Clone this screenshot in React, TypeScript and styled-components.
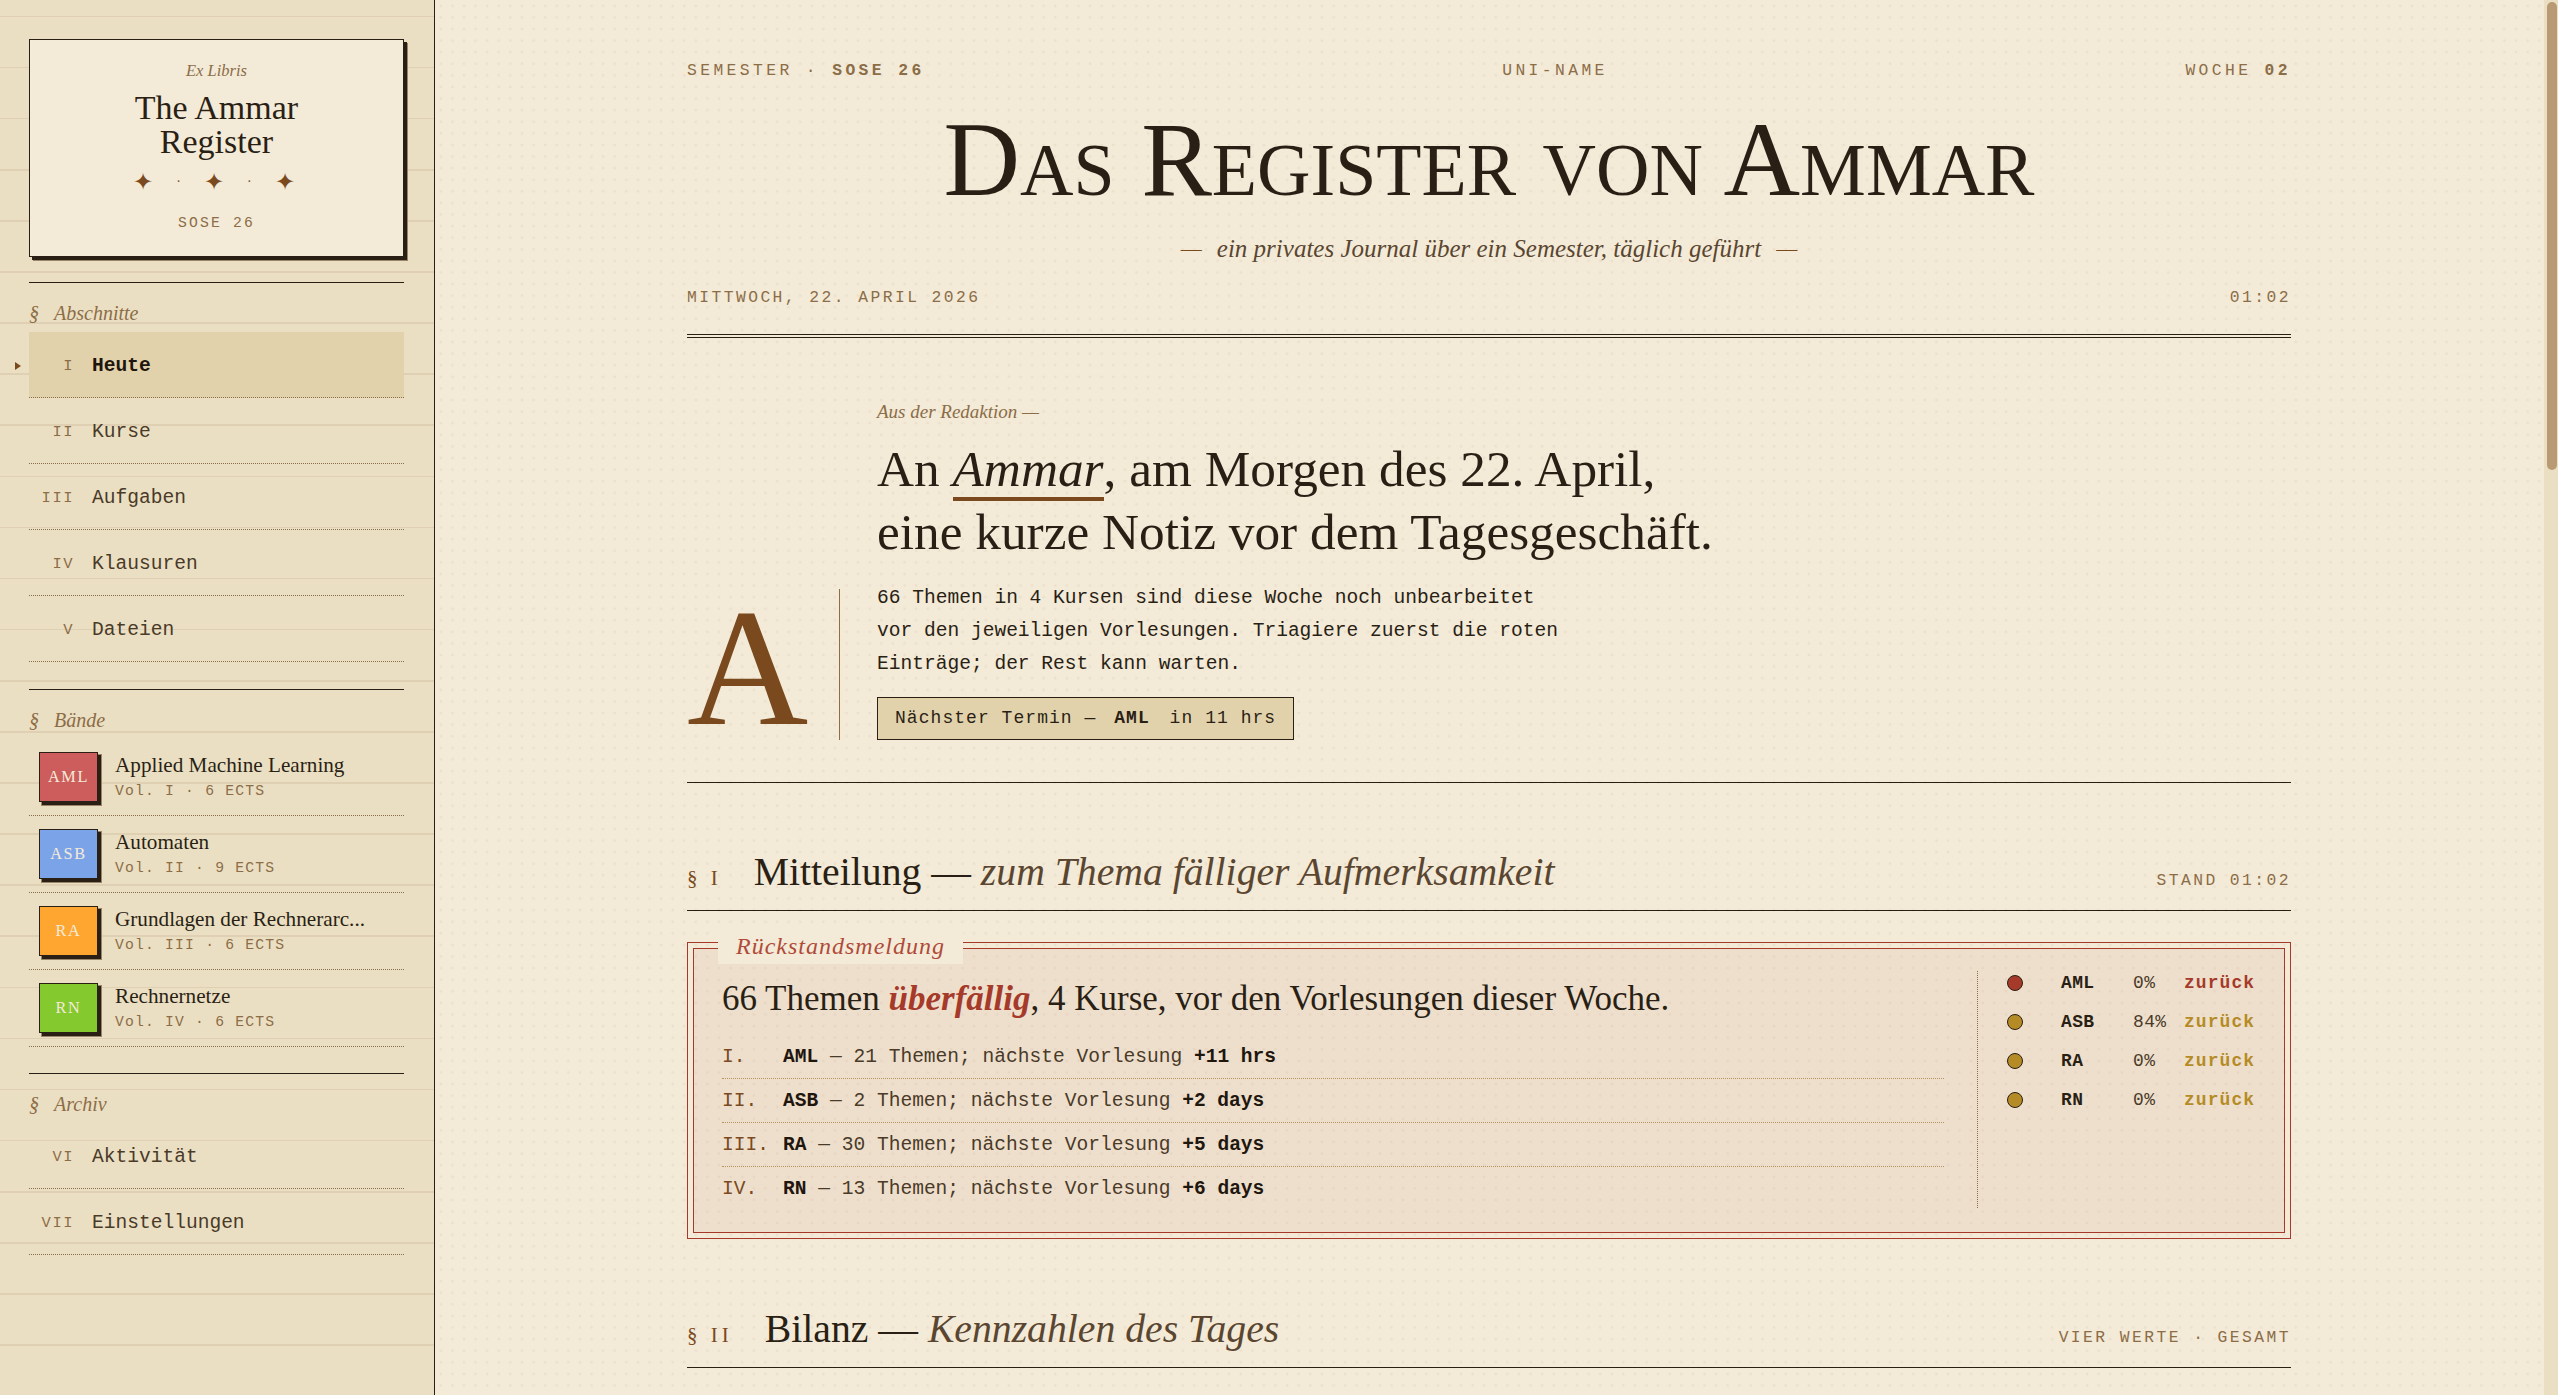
import styled, { createGlobalStyle } from 'styled-components';

const serif = `"Liberation Serif", "Times New Roman", serif`;
const mono = `"Liberation Mono", "Courier New", monospace`;

const GlobalStyle = createGlobalStyle`
  html, body {
    margin: 0;
    padding: 0;
    background: #f3ead8;
  }
`;

const Shell = styled.div`
  display: grid;
  grid-template-columns: 435px 1fr 14px;
  min-height: 100vh;
  color: #2a1f14;
`;

const Sidebar = styled.aside`
  box-sizing: border-box;
  min-height: 1395px;
  border-right: 1px solid #2a1f14;
  padding: 39px 30px 0 29px;
  background-color: #ebdfc3;
  background-image: repeating-linear-gradient(
    to bottom,
    transparent 0,
    transparent 15.6px,
    #dfd0b4 15.6px,
    #dfd0b4 17.2px,
    transparent 17.2px,
    transparent 51.1px
  );
`;

const Plate = styled.div`
  box-sizing: border-box;
  height: 218px;
  border: 1px solid #2a1f14;
  background: #f3ead8;
  box-shadow: 3px 3px 0 #2a1f14, 4px 4px 0 #9a8568;
  text-align: center;
  padding-top: 19px;
`;

const PlateKicker = styled.div`
  font: italic 16.5px/24px ${serif};
  color: #8b6d47;
`;

const PlateTitle = styled.div`
  font: 34px/34px ${serif};
  color: #2a1f14;
  margin-top: 8px;
`;

const PlateStars = styled.div`
  font: 24px/30px ${serif};
  color: #7a4a1e;
  margin-top: 8px;
  padding-right: 5px;
  display: flex;
  justify-content: center;
  align-items: center;
  gap: 23px;
`;

const PlateDot = styled.span`
  font-size: 14px;
`;

const PlateTerm = styled.div`
  font: 14.7px/20px ${mono};
  letter-spacing: 2.2px;
  color: #8b6d47;
  margin-top: 16px;
`;

const SectionLabel = styled.div<{ $gap: number }>`
  border-top: 1px solid #2a1f14;
  margin-top: ${(p) => p.$gap}px;
  height: 50px;
  box-sizing: border-box;
  padding-top: 16px;
  font: italic 20px/28px ${serif};
  color: #8b6d47;
`;

const Sect = styled.span`
  margin-right: 15px;
`;

const NavItem = styled.div<{ $active?: boolean }>`
  position: relative;
  box-sizing: border-box;
  display: grid;
  grid-template-columns: 45px 1fr;
  column-gap: 18px;
  align-items: center;
  height: 66px;
  padding-top: 2px;
  border-bottom: 1px dotted #8b6d47;
  background: ${(p) => (p.$active ? '#e2d2ac' : 'transparent')};
  font: ${(p) => (p.$active ? 'bold' : 'normal')} 19.57px ${mono};
  color: ${(p) => (p.$active ? '#1f160d' : '#4a3a28')};
`;

const NavMarker = styled.span`
  position: absolute;
  left: -14px;
  top: 30px;
  width: 0;
  height: 0;
  border-left: 6px solid #7a4a1e;
  border-top: 4px solid transparent;
  border-bottom: 4px solid transparent;
`;

const NavNum = styled.span`
  font: 15.5px ${mono};
  letter-spacing: 1.5px;
  text-align: right;
  color: #8b6d47;
`;

const CourseRow = styled.div`
  display: flex;
  gap: 17px;
  box-sizing: border-box;
  height: 77px;
  padding: 13px 0 0 10px;
  border-bottom: 1px dotted #8b6d47;
`;

const Spine = styled.div<{ $color: string }>`
  box-sizing: border-box;
  flex: none;
  width: 59px;
  height: 50px;
  border: 1px solid #2a1f14;
  background: ${(p) => p.$color};
  box-shadow: 3px 3px 0 #2a1f14, 3px 3px 0 1px #9a8568;
  font: 16.3px/48px ${serif};
  letter-spacing: 1.6px;
  text-align: center;
  color: #f3ead8;
`;

const CourseName = styled.div`
  font: 21.2px/26px ${serif};
  color: #2a1f14;
  white-space: nowrap;
`;

const CourseMeta = styled.div`
  font: 14.7px/20px ${mono};
  letter-spacing: 1.2px;
  color: #8b6d47;
  margin-top: 3px;
`;

const Main = styled.main`
  box-sizing: border-box;
  padding: 59px 253px 0 252px;
  background-color: #f3ead8;
  background-image: radial-gradient(circle, rgba(139, 109, 71, 0.08) 1.4px, transparent 1.6px);
  background-size: 11.6px 11.6px;
`;

const Masthead = styled.div`
  display: flex;
  justify-content: space-between;
  font: 16.31px/24px ${mono};
  letter-spacing: 3.42px;
  color: #8b6d47;
`;

const Strong = styled.strong`
  font-weight: bold;
`;

const BigTitle = styled.h1`
  margin: 21px 0 0;
  font: normal 106px/112px ${serif};
  font-variant: small-caps;
  text-align: center;
  color: #2a1f14;
`;

const Subtitle = styled.div`
  display: flex;
  justify-content: center;
  gap: 15px;
  font: italic 25px/34px ${serif};
  color: #5a4630;
  margin-top: 16px;
`;

const SubtitleDash = styled.span`
  font: 21px/34px ${serif};
  color: #7a4a1e;
`;

const DateRow = styled(Masthead)`
  margin-top: 20px;
  padding-bottom: 24px;
  border-bottom: 4px double #2a1f14;
  letter-spacing: 2.45px;
`;

const Editorial = styled.section`
  padding: 62px 0 42px;
  border-bottom: 1px solid #2a1f14;
`;

const EditorialHead = styled.div`
  margin-left: 190px;
`;

const Kicker = styled.div`
  font: italic 19px/24px ${serif};
  color: #8b6d47;
`;

const Lead = styled.h2`
  margin: 13px 0 0;
  font: normal 51.3px/63px ${serif};
  color: #2a1f14;
`;

const Ammar = styled.em`
  border-bottom: 4px solid #7a4a1e;
`;

const EditorialBody = styled.div`
  display: flex;
  margin-top: 19px;
`;

const DropCap = styled.div`
  box-sizing: border-box;
  flex: none;
  width: 153px;
  height: 151px;
  margin-top: 7px;
  border-right: 1px solid #8b6d47;
  font: 168px/156px ${serif};
  color: #7a4a1e;
`;

const Body = styled.div`
  margin-left: 37px;
`;

const BodyText = styled.p`
  margin: 0;
  font: 19.57px/33px ${mono};
  color: #2a1f14;
`;

const NextBadge = styled.div`
  display: inline-block;
  box-sizing: border-box;
  height: 43px;
  margin-top: 16px;
  padding: 0 17px;
  border: 1px solid #2a1f14;
  background: #e2d2ac;
  font: 17.94px/41px ${mono};
  letter-spacing: 1.08px;
  color: #2a1f14;
`;

const BadgeCode = styled.strong`
  font-weight: bold;
  margin: 0 8px 0 6px;
`;

const SectionHead = styled.div<{ $top: number }>`
  display: flex;
  align-items: baseline;
  margin-top: ${(p) => p.$top}px;
  padding-bottom: 7px;
  border-bottom: 1px solid #2a1f14;
`;

const SectionNum = styled.span`
  font: 21px/50px ${serif};
  letter-spacing: 4px;
  color: #7a4a1e;
  margin-right: 32px;
`;

const SectionTitle = styled.span`
  font: 39.7px/50px ${serif};
  color: #2a1f14;
`;

const SectionSub = styled.em`
  color: #5a4630;
`;

const SectionNote = styled.span`
  margin-left: auto;
  font: 16.31px ${mono};
  letter-spacing: 2.45px;
  color: #8b6d47;
`;

const Notice = styled.section`
  position: relative;
  box-sizing: border-box;
  margin-top: 31px;
  padding: 5px;
  border: 1px solid #a63a2a;
  height: 297px;
`;

const NoticeInner = styled.div`
  box-sizing: border-box;
  height: 100%;
  border: 1px solid #a63a2a;
  background: rgba(166, 58, 42, 0.06);
  display: grid;
  grid-template-columns: 1fr 307px;
  padding-left: 28px;
`;

const NoticeTag = styled.span`
  position: absolute;
  left: 30px;
  top: -14px;
  padding: 0 18px;
  background: #f3ead8;
  font: italic 24px/35px ${serif};
  letter-spacing: 1px;
  color: #b04a38;
`;

const NoticeLead = styled.h3`
  margin: 28px 0 0;
  font: normal 35px/44px ${serif};
  color: #2a1f14;
`;

const Overdue = styled.em`
  color: #a63a2a;
  font-weight: bold;
`;

const NoticeList = styled.div`
  margin: 14px 33px 0 0;
`;

const NoticeRow = styled.div<{ $last?: boolean }>`
  box-sizing: border-box;
  display: grid;
  grid-template-columns: 61px 1fr;
  height: 44px;
  align-items: center;
  border-bottom: ${(p) => (p.$last ? 'none' : '1px dotted #b5935e')};
  font: 19.57px ${mono};
  color: #4a3a28;
`;

const RowNum = styled.span`
  color: #7a4a1e;
`;

const RowStrong = styled.strong`
  font-weight: bold;
  color: #1f160d;
`;

const StatusList = styled.div`
  border-left: 1px dotted #8b6d47;
  margin: 22px 0 24px;
  padding: 1px 0 0 29px;
`;

const StatusRow = styled.div`
  display: grid;
  grid-template-columns: 54px 72px 51px 1fr;
  height: 22px;
  margin-bottom: 17px;
  align-items: center;
  font: 17.94px ${mono};
  letter-spacing: 0.4px;
  color: #4a3a28;
`;

const Dot = styled.span<{ $color: string }>`
  box-sizing: border-box;
  width: 16px;
  height: 16px;
  border-radius: 50%;
  border: 1px solid #2a1f14;
  background: ${(p) => p.$color};
`;

const StatusCode = styled.span`
  font-weight: bold;
  color: #2a1f14;
`;

const StatusState = styled.span<{ $color: string }>`
  color: ${(p) => p.$color};
  font-weight: bold;
  letter-spacing: 1.1px;
`;

const ScrollTrack = styled.div`
  box-sizing: border-box;
  background: #ebdfc3;
  padding: 2px 1px 0 3px;
`;

const ScrollThumb = styled.div`
  height: 468px;
  border-radius: 5px;
  background: #b89b74;
`;

const nav = [
  { num: 'II', label: 'Kurse' },
  { num: 'III', label: 'Aufgaben' },
  { num: 'IV', label: 'Klausuren' },
  { num: 'V', label: 'Dateien' },
];

const courses = [
  { code: 'AML', color: '#cd5c5c', name: 'Applied Machine Learning', meta: 'Vol. I · 6 ECTS' },
  { code: 'ASB', color: '#7ba3e8', name: 'Automaten', meta: 'Vol. II · 9 ECTS' },
  { code: 'RA', color: '#ffa630', name: 'Grundlagen der Rechnerarc...', meta: 'Vol. III · 6 ECTS' },
  { code: 'RN', color: '#84c92e', name: 'Rechnernetze', meta: 'Vol. IV · 6 ECTS' },
];

const notices = [
  { num: 'I.', code: 'AML', text: '21 Themen; nächste Vorlesung', when: '+11 hrs' },
  { num: 'II.', code: 'ASB', text: '2 Themen; nächste Vorlesung', when: '+2 days' },
  { num: 'III.', code: 'RA', text: '30 Themen; nächste Vorlesung', when: '+5 days' },
  { num: 'IV.', code: 'RN', text: '13 Themen; nächste Vorlesung', when: '+6 days' },
];

const statuses = [
  { code: 'AML', pct: '0%', color: '#a63a2a' },
  { code: 'ASB', pct: '84%', color: '#b58b25' },
  { code: 'RA', pct: '0%', color: '#b58b25' },
  { code: 'RN', pct: '0%', color: '#b58b25' },
];

const App = () => (
  <>
    <GlobalStyle />
    <Shell>
      <Sidebar>
        <Plate>
          <PlateKicker>Ex Libris</PlateKicker>
          <PlateTitle>
            The Ammar
            <br />
            Register
          </PlateTitle>
          <PlateStars>
            ✦<PlateDot>·</PlateDot>✦<PlateDot>·</PlateDot>✦
          </PlateStars>
          <PlateTerm>SOSE 26</PlateTerm>
        </Plate>
        <SectionLabel $gap={25}>
          <Sect>§</Sect>Abschnitte
        </SectionLabel>
        <NavItem $active>
          <NavMarker />
          <NavNum>I</NavNum>
          <span>Heute</span>
        </NavItem>
        {nav.map((item) => (
          <NavItem key={item.num}>
            <NavNum>{item.num}</NavNum>
            <span>{item.label}</span>
          </NavItem>
        ))}
        <SectionLabel $gap={27}>
          <Sect>§</Sect>Bände
        </SectionLabel>
        {courses.map((course) => (
          <CourseRow key={course.code}>
            <Spine $color={course.color}>{course.code}</Spine>
            <div>
              <CourseName>{course.name}</CourseName>
              <CourseMeta>{course.meta}</CourseMeta>
            </div>
          </CourseRow>
        ))}
        <SectionLabel $gap={26}>
          <Sect>§</Sect>Archiv
        </SectionLabel>
        <NavItem>
          <NavNum>VI</NavNum>
          <span>Aktivität</span>
        </NavItem>
        <NavItem>
          <NavNum>VII</NavNum>
          <span>Einstellungen</span>
        </NavItem>
      </Sidebar>
      <Main>
        <Masthead>
          <span>
            SEMESTER · <Strong>SOSE 26</Strong>
          </span>
          <span>UNI-NAME</span>
          <span>
            WOCHE <Strong>02</Strong>
          </span>
        </Masthead>
        <BigTitle>Das Register von Ammar</BigTitle>
        <Subtitle>
          <SubtitleDash>—</SubtitleDash>
          <span>ein privates Journal über ein Semester, täglich geführt</span>
          <SubtitleDash>—</SubtitleDash>
        </Subtitle>
        <DateRow>
          <span>MITTWOCH, 22. APRIL 2026</span>
          <span>01:02</span>
        </DateRow>
        <Editorial>
          <EditorialHead>
            <Kicker>Aus der Redaktion —</Kicker>
            <Lead>
              An <Ammar>Ammar</Ammar>, am Morgen des 22. April,
              <br />
              eine kurze Notiz vor dem Tagesgeschäft.
            </Lead>
          </EditorialHead>
          <EditorialBody>
            <DropCap>A</DropCap>
            <Body>
              <BodyText>
                66 Themen in 4 Kursen sind diese Woche noch unbearbeitet
                <br />
                vor den jeweiligen Vorlesungen. Triagiere zuerst die roten
                <br />
                Einträge; der Rest kann warten.
              </BodyText>
              <NextBadge>
                Nächster Termin — <BadgeCode>AML</BadgeCode> in 11 hrs
              </NextBadge>
            </Body>
          </EditorialBody>
        </Editorial>
        <SectionHead $top={64}>
          <SectionNum>§ I</SectionNum>
          <SectionTitle>
            Mitteilung — <SectionSub>zum Thema fälliger Aufmerksamkeit</SectionSub>
          </SectionTitle>
          <SectionNote>STAND 01:02</SectionNote>
        </SectionHead>
        <Notice>
          <NoticeTag>Rückstandsmeldung</NoticeTag>
          <NoticeInner>
            <div>
              <NoticeLead>
                66 Themen <Overdue>überfällig</Overdue>, 4 Kurse, vor den Vorlesungen dieser Woche.
              </NoticeLead>
              <NoticeList>
                {notices.map((row, i) => (
                  <NoticeRow key={row.num} $last={i === notices.length - 1}>
                    <RowNum>{row.num}</RowNum>
                    <span>
                      <RowStrong>{row.code}</RowStrong> — {row.text} <RowStrong>{row.when}</RowStrong>
                    </span>
                  </NoticeRow>
                ))}
              </NoticeList>
            </div>
            <StatusList>
              {statuses.map((row) => (
                <StatusRow key={row.code}>
                  <Dot $color={row.color} />
                  <StatusCode>{row.code}</StatusCode>
                  <span>{row.pct}</span>
                  <StatusState $color={row.color}>zurück</StatusState>
                </StatusRow>
              ))}
            </StatusList>
          </NoticeInner>
        </Notice>
        <SectionHead $top={65}>
          <SectionNum>§ II</SectionNum>
          <SectionTitle>
            Bilanz — <SectionSub>Kennzahlen des Tages</SectionSub>
          </SectionTitle>
          <SectionNote>VIER WERTE · GESAMT</SectionNote>
        </SectionHead>
      </Main>
      <ScrollTrack>
        <ScrollThumb />
      </ScrollTrack>
    </Shell>
  </>
);

export default App;
